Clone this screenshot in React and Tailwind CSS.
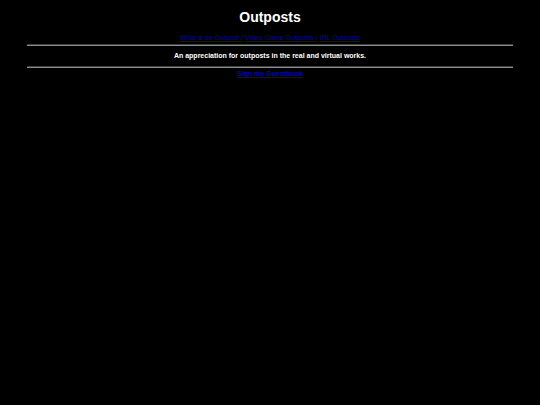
const links = [
  { label: "What is an Outpost /", href: "#what" },
  { label: "Video Game Outposts /", href: "#games" },
  { label: "IRL Outposts", href: "#irl" },
];

const Divider = () => (
  <hr className="h-[2px] border-t border-b border-t-[#404040] border-b-[#8c8c8c]" />
);

const App = () => {
  return (
    <div className="min-h-screen bg-black px-[5%] pt-2 text-center font-['Liberation_Sans',Arial,sans-serif] text-[7px] leading-2 text-white">
      <h1 className="text-[14px] leading-[18px] font-bold">Outposts</h1>

      {/* Site links */}
      <nav className="mt-2">
        {links.map((link) => (
          <span key={link.label}>
            <a href={link.href} className="text-[#0000b4] underline">
              {link.label}
            </a>{" "}
          </span>
        ))}
      </nav>

      <div className="mt-[2px]">
        <Divider />
        <p className="my-[6px] font-bold">
          An appreciation for outposts in the real and virtual works.
        </p>
        <Divider />
      </div>

      <a
        href="#guestbook"
        className="mt-[2px] inline-block font-bold text-[#0000c8] underline"
      >
        Sign my Guestbook
      </a>
    </div>
  );
};

export default App;
